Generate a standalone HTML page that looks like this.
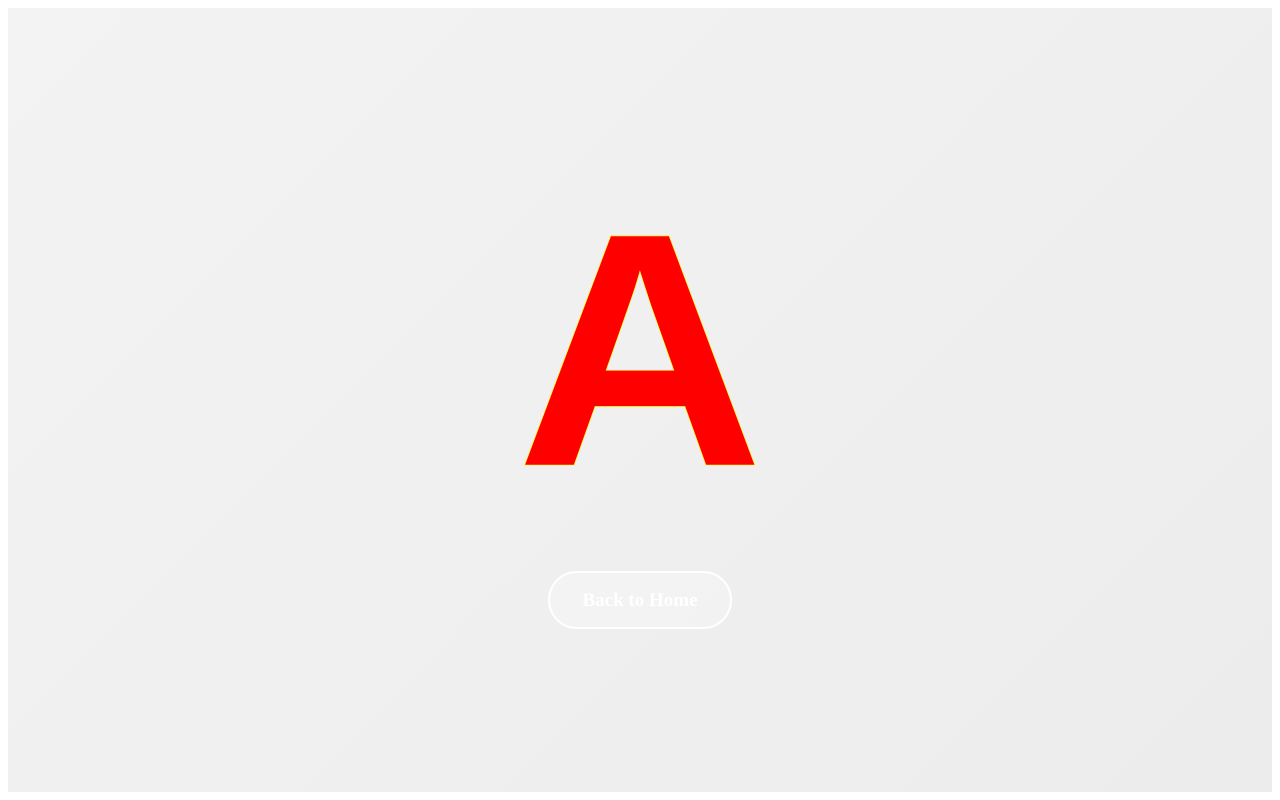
<!DOCTYPE html>
<html><head><meta charset="utf-8"><style>
html,body{margin:0;padding:0;width:1280px;height:800px;background:#fff;overflow:hidden}
.box{position:absolute;left:8px;top:8px;width:1264px;height:784px;background:linear-gradient(135deg,#f3f3f3,#ececec)}
.a{position:absolute;left:0;width:1280px;top:184px;text-align:center;font:bold 333px/1 "Liberation Sans",sans-serif;color:#f00;-webkit-text-stroke:0.6px #ff0;transform:scaleX(1.03);transform-origin:640px 0}
.btn{position:absolute;left:548px;top:571px;width:180px;height:54px;border:2px solid #fff;border-radius:29px;background:rgba(255,255,255,0.25);color:#fff;font:bold 19px/56px "Liberation Serif",serif;text-align:center}
</style></head><body>
<div class="box"></div>
<div class="a">A</div>
<div class="btn">Back to Home</div>
</body></html>
